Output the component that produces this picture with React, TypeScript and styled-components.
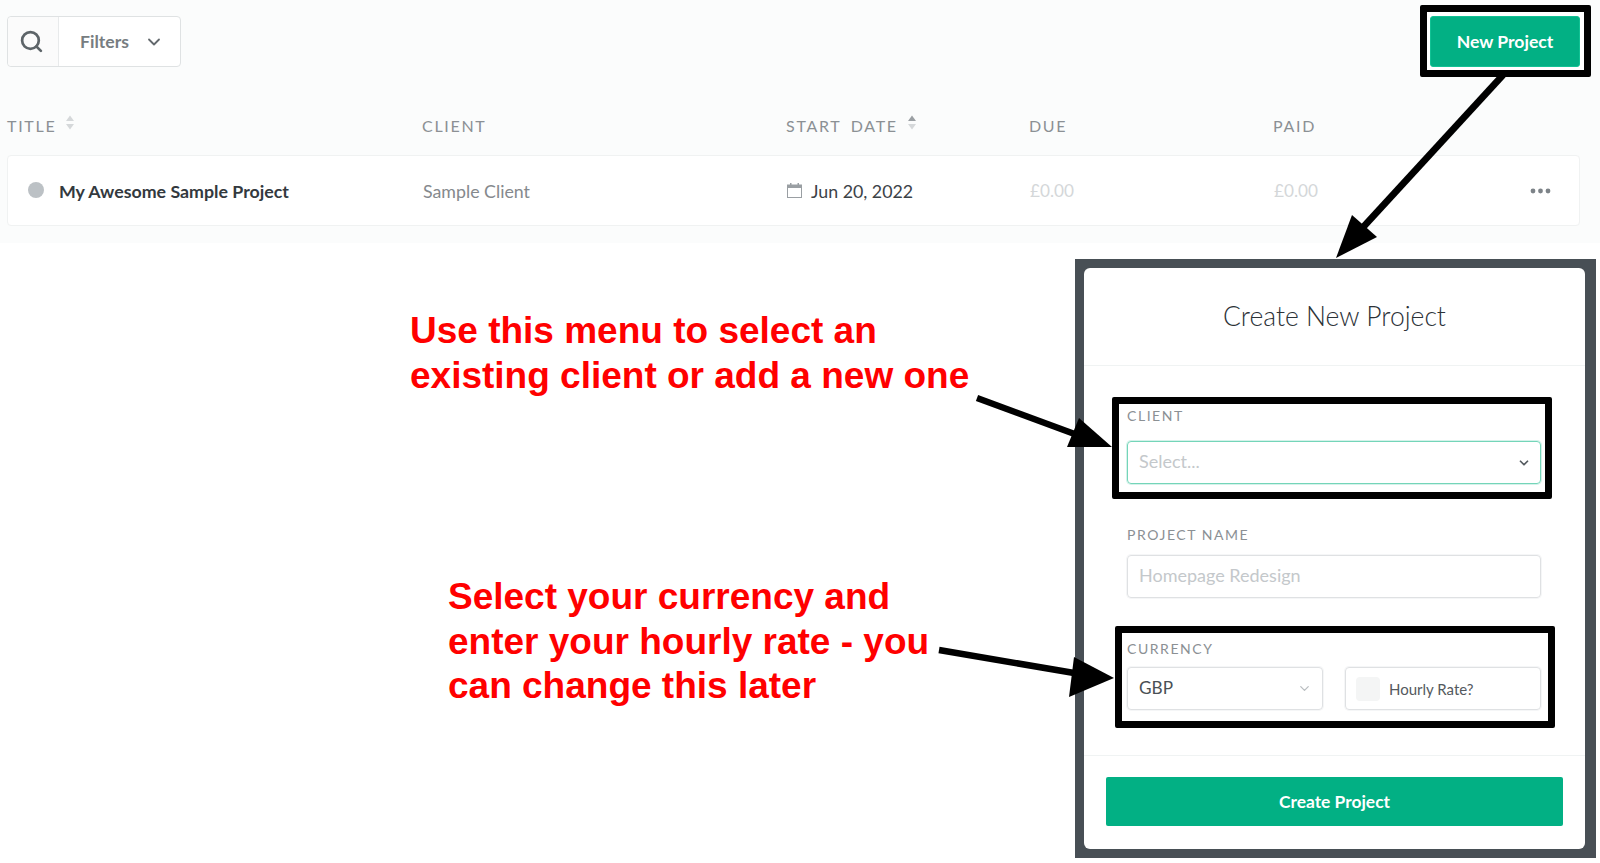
import React from 'react'
import styled, { createGlobalStyle } from 'styled-components'
import { Search, ChevronDown } from 'lucide-react'

const GlobalStyle = createGlobalStyle`
    html, body {
        margin: 0;
        padding: 0;
        background: #ffffff;
    }
    body {
        font-family: Lato, "Open Sans", sans-serif;
        overflow: hidden;
    }
    * {
        box-sizing: border-box;
    }
`

const SortArrows: React.FC<{ active?: boolean }> = ({ active }) => (
    <SortIcon viewBox="0 0 10 16">
        <path d="M5 1 L9 6.5 H1 Z" fill={active ? '#9a9fa3' : '#d5d8da'} />
        <path d="M5 15 L9 9.5 H1 Z" fill="#d5d8da" />
    </SortIcon>
)

const App: React.FC = () => {
    return (
        <Page>
            <GlobalStyle />
            <ProjectsBand>
                <Toolbar>
                    <FilterGroup>
                        <SearchCell>
                            <Search size={25} strokeWidth={2.6} />
                        </SearchCell>
                        <FilterCell>
                            Filters
                            <ChevronDown size={20} strokeWidth={2.2} />
                        </FilterCell>
                    </FilterGroup>
                    <NewProjectCallout>
                        <NewProjectButton>New Project</NewProjectButton>
                    </NewProjectCallout>
                </Toolbar>
                <TableHead>
                    <HeadCell>TITLE <SortArrows /></HeadCell>
                    <HeadCell>CLIENT</HeadCell>
                    <HeadCell>START DATE <SortArrows active /></HeadCell>
                    <HeadCell>DUE</HeadCell>
                    <HeadCell>PAID</HeadCell>
                </TableHead>
                <ProjectRow>
                    <TitleCell>
                        <StatusDot />
                        My Awesome Sample Project
                    </TitleCell>
                    <ClientCell>Sample Client</ClientCell>
                    <DateCell>
                        <svg width="15" height="15" viewBox="0 0 15 15">
                            <rect x="0.5" y="2" width="14" height="12.5" fill="none" stroke="#9a9fa3" />
                            <rect x="0.5" y="2" width="14" height="3" fill="#9a9fa3" />
                            <rect x="3" y="0" width="1.5" height="3" fill="#9a9fa3" />
                            <rect x="10.5" y="0" width="1.5" height="3" fill="#9a9fa3" />
                        </svg>
                        Jun 20, 2022
                    </DateCell>
                    <MoneyCell>£0.00</MoneyCell>
                    <MoneyCell>£0.00</MoneyCell>
                    <DotsCell>
                        <svg width="21" height="6" viewBox="0 0 21 6">
                            <circle cx="3" cy="3" r="2.4" fill="#7d8388" />
                            <circle cx="10.5" cy="3" r="2.4" fill="#7d8388" />
                            <circle cx="18" cy="3" r="2.4" fill="#7d8388" />
                        </svg>
                    </DotsCell>
                </ProjectRow>
            </ProjectsBand>

            <LowerArea>
                <Notes>
                    <Note $indent={410} $top={50}>
                        Use this menu to select an<br />
                        existing client or add a new one
                    </Note>
                    <Note $indent={448} $top={177}>
                        Select your currency and<br />
                        enter your hourly rate - you<br />
                        can change this later
                    </Note>
                </Notes>

                <ModalFrame>
                    <Modal>
                        <ModalHeader>Create New Project</ModalHeader>
                        <ModalBody>
                            <FieldCallout $shift={28} $top={4} $left={8} $right={4}>
                                <FieldLabel $gap={17}>CLIENT</FieldLabel>
                                <FocusedSelect>
                                    <Placeholder>Select...</Placeholder>
                                    <ChevronDown size={14} strokeWidth={3} color="#555b60" />
                                </FocusedSelect>
                            </FieldCallout>
                            <PlainField>
                                <FieldLabel $gap={12}>PROJECT NAME</FieldLabel>
                                <TextBox>
                                    <Placeholder>Homepage Redesign</Placeholder>
                                </TextBox>
                            </PlainField>
                            <FieldCallout $shift={31} $top={8} $left={5} $right={7}>
                                <FieldLabel $gap={10}>CURRENCY</FieldLabel>
                                <CurrencyRow>
                                    <CurrencySelect>
                                        <span>GBP</span>
                                        <ChevronDown size={15} strokeWidth={2} color="#b9bdc0" />
                                    </CurrencySelect>
                                    <RateBox>
                                        <RateCheck />
                                        Hourly Rate?
                                    </RateBox>
                                </CurrencyRow>
                            </FieldCallout>
                        </ModalBody>
                        <ModalFooter>
                            <CreateButton>Create Project</CreateButton>
                        </ModalFooter>
                    </Modal>
                </ModalFrame>
            </LowerArea>

            <ArrowLayer viewBox="0 0 1600 863">
                <line x1="1503" y1="75" x2="1355" y2="236" stroke="#000" strokeWidth="7" />
                <polygon points="1336,258 1352,215 1377,237" fill="#000" />
                <line x1="977" y1="398" x2="1080" y2="436" stroke="#000" strokeWidth="6.5" />
                <polygon points="1112,447 1079,418 1067,447" fill="#000" />
                <line x1="939" y1="650" x2="1080" y2="674" stroke="#000" strokeWidth="6.5" />
                <polygon points="1114,678 1074,657 1069,697" fill="#000" />
            </ArrowLayer>
        </Page>
    )
}

const Page = styled.div`
    position: relative;
    width: 1600px;
    height: 863px;
    overflow: hidden;
`
const ProjectsBand = styled.section`
    height: 243px;
    background: #fbfcfc;
    padding: 5px 9px 0 7px;
`
const Toolbar = styled.div`
    display: flex;
    justify-content: space-between;
    align-items: flex-start;
    height: 72px;
`
const FilterGroup = styled.div`
    display: flex;
    width: 174px;
    height: 51px;
    margin-top: 11px;
    background: #ffffff;
    border: 1px solid #dfe2e3;
    border-radius: 4px;
`
const SearchCell = styled.div`
    display: flex;
    align-items: center;
    justify-content: center;
    width: 51px;
    padding-right: 3px;
    color: #5d6468;
    background: #fbfbfb;
    border-right: 1px solid #e8eaeb;
    border-radius: 4px 0 0 4px;
`
const FilterCell = styled.div`
    display: flex;
    flex: 1;
    align-items: center;
    justify-content: space-between;
    padding: 0 16px 0 21px;
    font-size: 17.6px;
    font-weight: 700;
    color: #777d81;
    svg {
        color: #63696d;
    }
`
const NewProjectCallout = styled.div`
    width: 171px;
    height: 72px;
    padding: 4px 4px 3px 3px;
    background: #ffffff;
    border: 7px solid #000000;
    border-radius: 2px;
`
const NewProjectButton = styled.button`
    width: 100%;
    height: 100%;
    padding: 0;
    background: #02b084;
    border: 1px solid #12c194;
    border-radius: 3px;
    color: #ffffff;
    font-family: inherit;
    font-size: 17.6px;
    font-weight: 700;
`
const columns = `415px 364px 243px 244px 1fr 80px`
const TableHead = styled.div`
    display: grid;
    grid-template-columns: ${columns};
    align-items: center;
    height: 30px;
    margin: 33px 11px 0 0;
`
const HeadCell = styled.div`
    display: flex;
    align-items: center;
    gap: 9px;
    font-size: 16px;
    letter-spacing: 1.7px;
    word-spacing: 4px;
    color: #8b9094;
`
const SortIcon = styled.svg`
    width: 10px;
    height: 17px;
    margin-top: -5px;
`
const ProjectRow = styled.div`
    display: grid;
    grid-template-columns: ${columns};
    align-items: center;
    height: 71px;
    margin: 15px 11px 0 0;
    background: #ffffff;
    border: 1px solid #f0f2f2;
    border-radius: 4px;
    font-size: 17.8px;
`
const TitleCell = styled.div`
    display: flex;
    align-items: center;
    gap: 15px;
    padding-left: 20px;
    font-weight: 700;
    color: #33393e;
`
const StatusDot = styled.span`
    width: 16px;
    height: 16px;
    margin-top: -2px;
    border-radius: 50%;
    background: #bcc1c5;
`
const ClientCell = styled.div`
    color: #85898d;
`
const DateCell = styled.div`
    display: flex;
    align-items: center;
    gap: 9px;
    color: #3c4247;
`
const MoneyCell = styled.div`
    font-size: 17.2px;
    color: #d4d7d9;
`
const DotsCell = styled.div`
    display: flex;
    justify-content: flex-end;
    padding-right: 28px;
`
const LowerArea = styled.div`
    display: flex;
    justify-content: space-between;
    padding: 16px 4px 0 0;
`
const Notes = styled.div`
    display: flex;
    flex-direction: column;
`
const Note = styled.p<{ $indent: number; $top: number }>`
    margin: ${p => p.$top}px 0 0 ${p => p.$indent}px;
    font-family: "Liberation Sans", Arial, sans-serif;
    font-size: 37px;
    font-weight: 700;
    line-height: 44.5px;
    color: #ff0000;
    white-space: nowrap;
`
const ModalFrame = styled.div`
    width: 521px;
    height: 599px;
    padding: 9px 11px 9px 9px;
    background: #484f55;
`
const Modal = styled.div`
    display: flex;
    flex-direction: column;
    height: 100%;
    background: #ffffff;
    border-radius: 6px;
`
const ModalHeader = styled.div`
    display: flex;
    align-items: center;
    justify-content: center;
    height: 98px;
    padding-bottom: 2px;
    border-bottom: 1px solid #f0f3f3;
    font-size: 26.5px;
    font-weight: 300;
    color: #2c3237;
`
const ModalBody = styled.div`
    flex: 1;
    padding-top: 31px;
`
const FieldCallout = styled.div<{ $shift: number; $top: number; $left: number; $right: number }>`
    width: 440px;
    height: 102px;
    margin-left: ${p => p.$shift}px;
    padding: ${p => p.$top}px ${p => p.$right}px 0 ${p => p.$left}px;
    border: 7px solid #000000;
    border-radius: 2px;
`
const PlainField = styled.div`
    width: 414px;
    margin: 28px 0 28px 43px;
`
const FieldLabel = styled.div<{ $gap: number }>`
    height: 16px;
    margin-bottom: ${p => p.$gap}px;
    font-size: 14px;
    line-height: 16px;
    letter-spacing: 1.55px;
    color: #8b9094;
`
const FocusedSelect = styled.div`
    display: flex;
    align-items: center;
    justify-content: space-between;
    height: 43px;
    padding: 0 9px 0 11px;
    border: 1px solid #74d5b9;
    border-radius: 4px;
    box-shadow: 0 0 0 1px rgba(116, 213, 185, 0.3);
`
const Placeholder = styled.span`
    margin-top: -4px;
    font-size: 18px;
    color: #c4c8cb;
`
const TextBox = styled.div`
    display: flex;
    align-items: center;
    height: 43px;
    padding: 0 11px;
    border: 1px solid #dfe1e3;
    border-radius: 4px;
    box-shadow: 0 0 0 1px rgba(223, 225, 227, 0.3);
`
const CurrencyRow = styled.div`
    display: grid;
    grid-template-columns: 196px 196px;
    justify-content: space-between;
`
const CurrencySelect = styled.div`
    display: flex;
    align-items: center;
    justify-content: space-between;
    height: 43px;
    padding: 0 10px 0 11px;
    border: 1px solid #dfe1e3;
    border-radius: 4px;
    box-shadow: 0 0 0 1px rgba(223, 225, 227, 0.3);
    font-size: 17.2px;
    color: #4a5055;
    span {
        margin-top: -2px;
    }
`
const RateBox = styled.div`
    display: flex;
    align-items: center;
    gap: 9px;
    height: 43px;
    padding-left: 10px;
    border: 1px solid #dfe1e3;
    border-radius: 4px;
    box-shadow: 0 0 0 1px rgba(223, 225, 227, 0.3);
    font-size: 15px;
    color: #54595e;
`
const RateCheck = styled.span`
    width: 24px;
    height: 24px;
    background: #f4f5f5;
    border-radius: 4px;
`
const ModalFooter = styled.div`
    height: 94px;
    padding: 21px 22px 0 22px;
    border-top: 1px solid #f0f3f3;
`
const CreateButton = styled.button`
    width: 100%;
    height: 49px;
    padding: 0;
    background: #02b084;
    border: 0;
    border-radius: 2px;
    color: #ffffff;
    font-family: inherit;
    font-size: 17.4px;
    font-weight: 700;
`
const ArrowLayer = styled.svg`
    position: absolute;
    top: 0;
    left: 0;
    width: 1600px;
    height: 863px;
    pointer-events: none;
`

export default App
